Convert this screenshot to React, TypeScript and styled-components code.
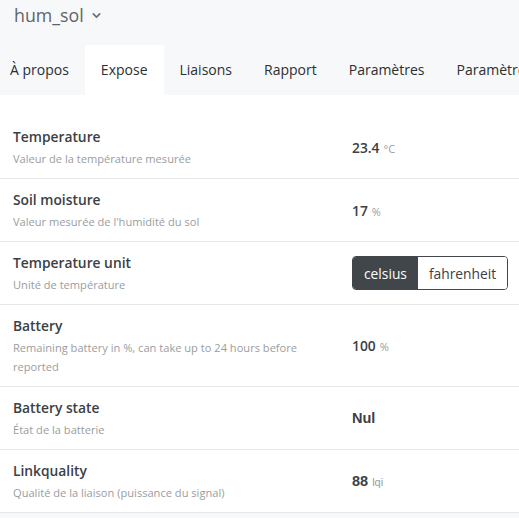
import React, { useState } from 'react';
import styled, { createGlobalStyle } from 'styled-components';
import { ChevronDown } from 'lucide-react';

const GlobalStyle = createGlobalStyle`
  html, body {
    margin: 0;
    padding: 0;
    background: #f7f8fa;
    font-family: "Open Sans", "Noto Sans", sans-serif;
    color: #3b4045;
  }
  * { box-sizing: border-box; }
`;

const Page = styled.div`
  width: 519px;
  height: 518px;
  overflow: hidden;
  display: flex;
  flex-direction: column;
`;

const Header = styled.div`
  display: flex;
  align-items: center;
  gap: 6px;
  height: 30px;
  padding-left: 14px;
  font-size: 17.8px;
  color: #60656a;
`;

const TabBar = styled.nav`
  display: flex;
  margin-top: 15px;
  margin-left: -6px;
  white-space: nowrap;
`;

const Tab = styled.div<{ $active?: boolean }>`
  flex: none;
  padding: 0 16px;
  height: 50px;
  display: flex;
  align-items: center;
  padding-bottom: 2px;
  font-size: 14px;
  color: #2b2f33;
  background: ${p => (p.$active ? '#ffffff' : 'transparent')};
`;

const Card = styled.div`
  background: #ffffff;
  padding-top: 21px;
  border-bottom: 1px solid #e6e7e9;
`;

const Row = styled.div<{ $last?: boolean }>`
  display: grid;
  grid-template-columns: 339px 1fr;
  align-items: center;
  padding: 10px 0 10px 13px;
  border-bottom: ${p => (p.$last ? 'none' : '1px solid #e6e7e9')};
`;

const Label = styled.div`
  display: flex;
  flex-direction: column;
`;

const Title = styled.div`
  font-size: 13.8px;
  font-weight: 600;
  line-height: 22px;
  color: #3b4045;
`;

const Desc = styled.div`
  font-size: 11.1px;
  line-height: 19px;
  margin-top: 1px;
  color: #9a9da0;
  padding-right: 30px;
`;

const Value = styled.div<{ $arial?: boolean }>`
  font-family: ${p => (p.$arial ? '"Liberation Sans", Arial, sans-serif' : 'inherit')};
  font-size: ${p => (p.$arial ? '14.5px' : '13.8px')};
  font-weight: 600;
  color: #3b4045;
`;

const Unit = styled.span`
  font-size: 11px;
  font-weight: 400;
  color: #9a9da0;
  margin-left: 4px;
`;

const Toggle = styled.div`
  display: inline-flex;
  height: 34px;
  border: 1px solid #41464b;
  border-radius: 4px;
  overflow: hidden;
`;

const ToggleButton = styled.button<{ $active?: boolean }>`
  border: none;
  padding: 0 11px;
  font-family: inherit;
  font-size: 13.8px;
  color: ${p => (p.$active ? '#ffffff' : '#3b4045')};
  background: ${p => (p.$active ? '#41464b' : '#ffffff')};
  cursor: pointer;
`;

const tabs = ['À propos', 'Expose', 'Liaisons', 'Rapport', 'Paramètres', 'Paramètres (spécifiques)'];

export default function App() {
  const [unit, setUnit] = useState('celsius');
  return (
    <Page>
      <GlobalStyle />
      <Header>
        hum_sol
        <ChevronDown size={13} strokeWidth={3} color="#6b7075" />
      </Header>
      <TabBar>
        {tabs.map(t => (
          <Tab key={t} $active={t === 'Expose'}>{t}</Tab>
        ))}
      </TabBar>
      <Card>
        <Row>
          <Label>
            <Title>Temperature</Title>
            <Desc>Valeur de la température mesurée</Desc>
          </Label>
          <Value>23.4<Unit>°C</Unit></Value>
        </Row>
        <Row>
          <Label>
            <Title>Soil moisture</Title>
            <Desc>Valeur mesurée de l'humidité du sol</Desc>
          </Label>
          <Value>17<Unit>%</Unit></Value>
        </Row>
        <Row>
          <Label>
            <Title>Temperature unit</Title>
            <Desc>Unité de température</Desc>
          </Label>
          <div>
            <Toggle>
              {['celsius', 'fahrenheit'].map(u => (
                <ToggleButton key={u} $active={unit === u} onClick={() => setUnit(u)}>{u}</ToggleButton>
              ))}
            </Toggle>
          </div>
        </Row>
        <Row>
          <Label>
            <Title>Battery</Title>
            <Desc>Remaining battery in %, can take up to 24 hours before reported</Desc>
          </Label>
          <Value>100<Unit>%</Unit></Value>
        </Row>
        <Row>
          <Label>
            <Title>Battery state</Title>
            <Desc>État de la batterie</Desc>
          </Label>
          <Value $arial>Nul</Value>
        </Row>
        <Row $last>
          <Label>
            <Title>Linkquality</Title>
            <Desc>Qualité de la liaison (puissance du signal)</Desc>
          </Label>
          <Value $arial>88<Unit style={{ fontFamily: 'inherit' }}>lqi</Unit></Value>
        </Row>
      </Card>
    </Page>
  );
}
